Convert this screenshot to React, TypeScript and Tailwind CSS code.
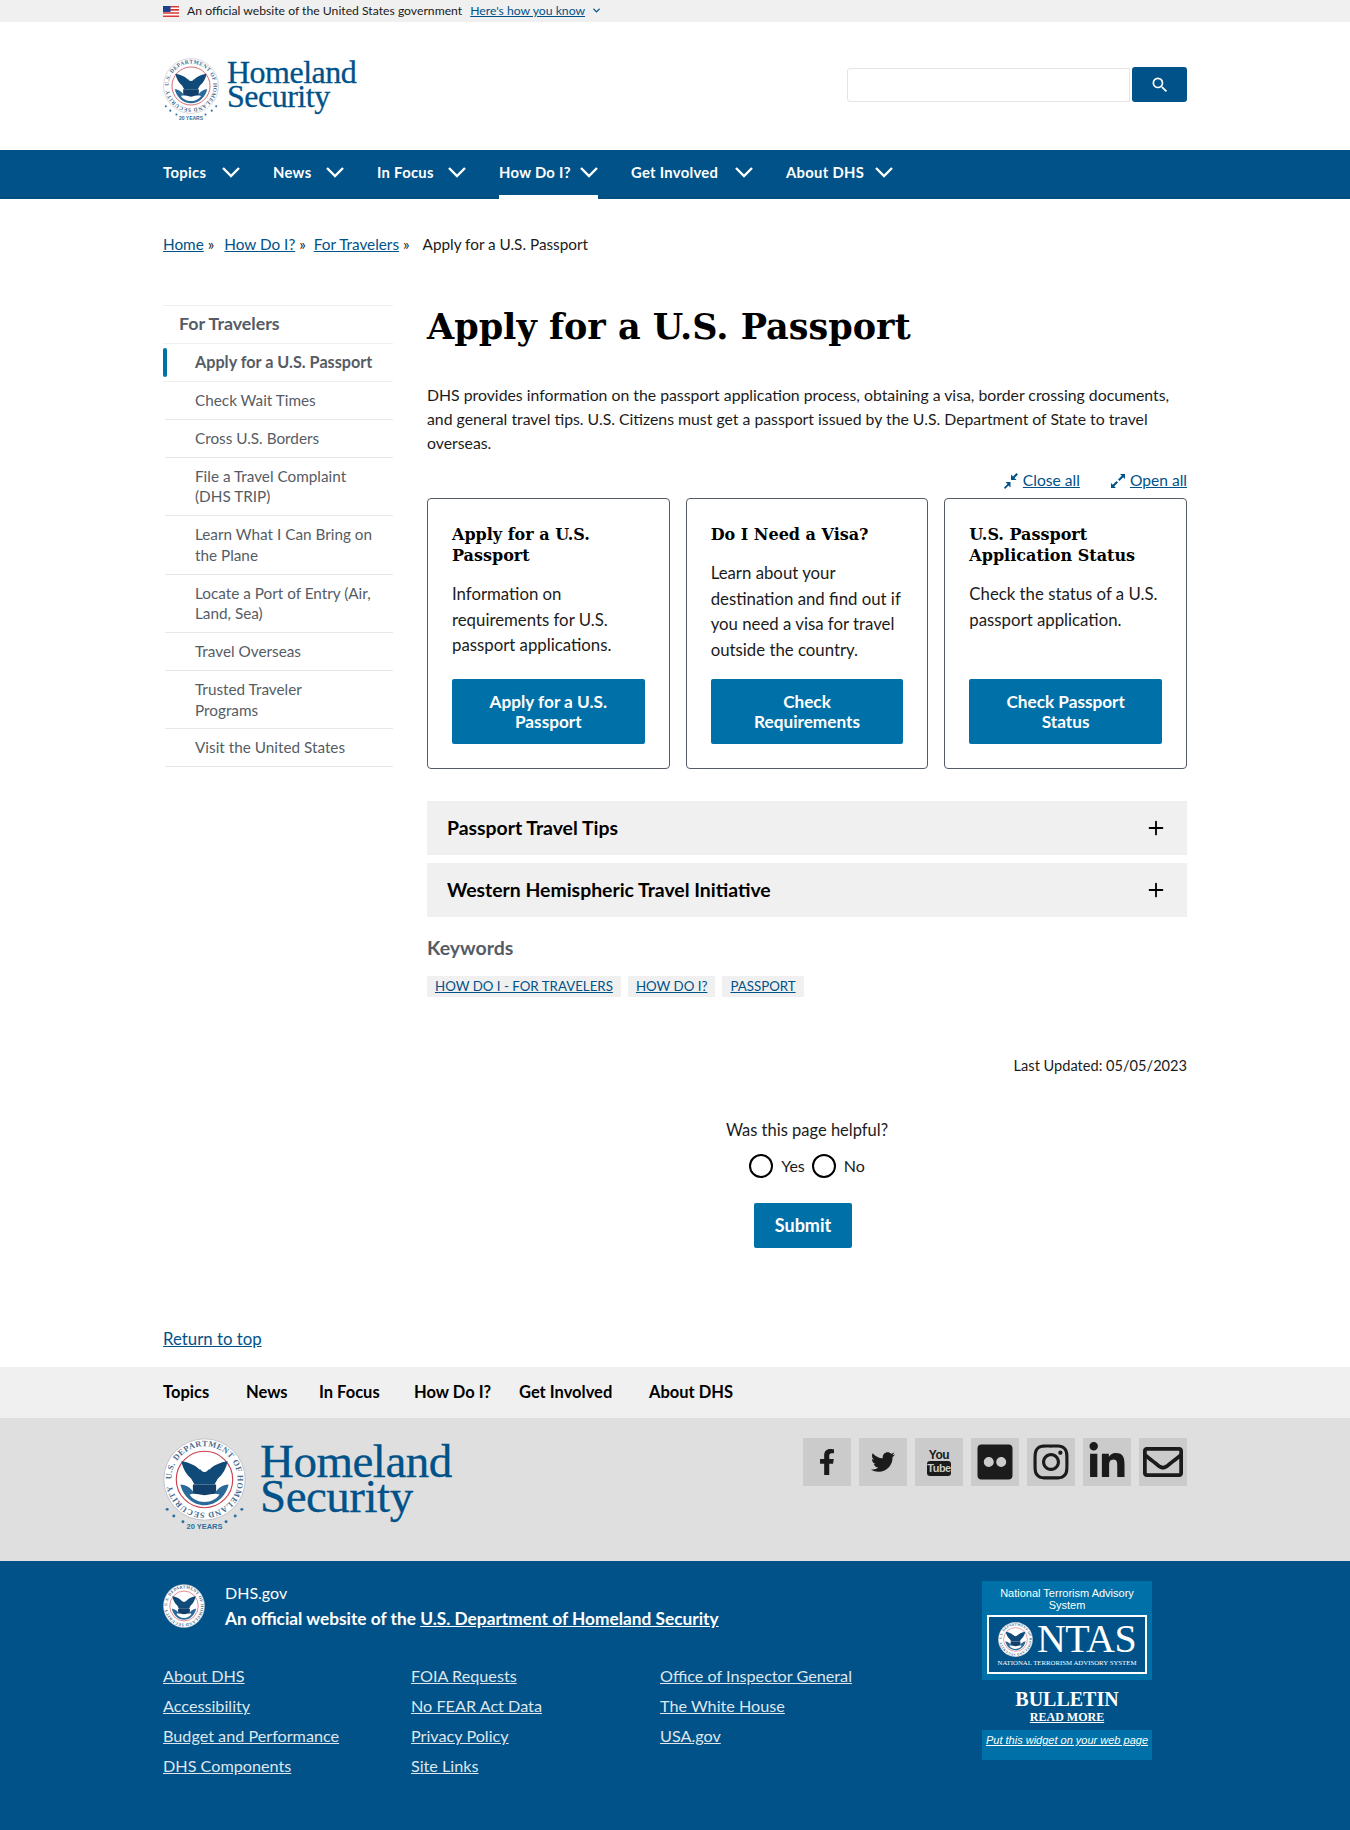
import { ChevronDown, Plus } from "lucide-react";
import { MdSearch } from "react-icons/md";
import { FaFacebookF, FaTwitter, FaFlickr, FaInstagram, FaLinkedinIn, FaRegEnvelope } from "react-icons/fa";

const navItems = [
  { label: "Topics", width: "w-[44px]" },
  { label: "News", width: "w-[38px]" },
  { label: "In Focus", width: "w-[56px]" },
  { label: "How Do I?", width: "w-[66px]" },
  { label: "Get Involved", width: "w-[89px]" },
  { label: "About DHS", width: "w-[74px]" },
];

const footerNav = [
  { label: "Topics", width: "w-[83px]" },
  { label: "News", width: "w-[73px]" },
  { label: "In Focus", width: "w-[95px]" },
  { label: "How Do I?", width: "w-[105px]" },
  { label: "Get Involved", width: "w-[130px]" },
  { label: "About DHS", width: "w-[90px]" },
];

const sideItems = [
  "Check Wait Times",
  "Cross U.S. Borders",
  "File a Travel Complaint (DHS TRIP)",
  "Learn What I Can Bring on the Plane",
  "Locate a Port of Entry (Air, Land, Sea)",
  "Travel Overseas",
  "Trusted Traveler\nPrograms",
  "Visit the United States",
];

const cards = [
  {
    title: "Apply for a U.S. Passport",
    text: "Information on requirements for U.S. passport applications.",
    button: "Apply for a U.S. Passport",
  },
  {
    title: "Do I Need a Visa?",
    text: "Learn about your destination and find out if you need a visa for travel outside the country.",
    button: "Check Requirements",
  },
  {
    title: "U.S. Passport Application Status",
    text: "Check the status of a U.S. passport application.",
    button: "Check Passport Status",
  },
];

const footerCols = [
  ["About DHS", "Accessibility", "Budget and Performance", "DHS Components"],
  ["FOIA Requests", "No FEAR Act Data", "Privacy Policy", "Site Links"],
  ["Office of Inspector General", "The White House", "USA.gov"],
];

function Seal({ size, width, years = true }: { size: number; width?: number; years?: boolean }) {
  const id = `seal-ring-${size}`;
  return (
    <svg
      width={width ?? size}
      height={years ? size * 1.15 : size}
      viewBox={years ? "0 0 100 115" : "0 0 100 100"}
      preserveAspectRatio={width ? "none" : "xMidYMid meet"}
      className="shrink-0"
    >
      <circle cx="50" cy="50" r="49" fill="#fff" stroke="#b9bcc4" strokeWidth="1" />
      <defs>
        <path id={id} d="M50 50m-40 0a40 40 0 1 1 80 0a40 40 0 1 1-80 0" />
      </defs>
      <text fontSize="10" fontWeight="700" fill="#4a6c8f" fontFamily="'Liberation Serif', serif" letterSpacing="0.6">
        <textPath href={`#${id}`}>U.S. DEPARTMENT OF HOMELAND SECURITY</textPath>
      </text>
      <circle cx="50" cy="50" r="34" fill="#fff" stroke="#c8434f" strokeWidth="1.4" />
      {/* eagle wings */}
      <path d="M22 28c9 1 17 5 22 10h12c5-5 13-9 22-10-2 9-6 16-12 21l-4 7H38l-4-7c-6-5-10-12-12-21z" fill="#0f4a78" />
      <circle cx="50" cy="36" r="5" fill="#fff" />
      {/* lower field with land and water */}
      <path d="M21 56c3 0 7 1 11 4l6 6h24l6-6c4-3 8-4 11-4-3 14-15 25-29 25S24 70 21 56z" fill="#2a6a9a" />
      <path d="M36 56h28v6c0 8-7 12-14 15-7-3-14-7-14-15z" fill="#123f6b" />
      <path d="M32 68c6-2 10 0 18 1 8-1 12-3 18-1-3 5-10 9-18 9s-15-4-18-9z" fill="#fff" />
      {years && (
        <g fill="#2d6f9e">
          <circle cx="5" cy="86" r="1.8" />
          <circle cx="13" cy="94" r="1.8" />
          <circle cx="24" cy="101" r="1.8" />
          <circle cx="76" cy="101" r="1.8" />
          <circle cx="87" cy="94" r="1.8" />
          <circle cx="95" cy="86" r="1.8" />
          <text x="50" y="110" textAnchor="middle" fontSize="9" fontWeight="700" fontFamily="'Liberation Sans', sans-serif">
            20 YEARS
          </text>
        </g>
      )}
    </svg>
  );
}

function Flag() {
  return (
    <svg width="16" height="11" viewBox="0 0 16 11" className="shrink-0">
      <rect width="16" height="11" fill="#fff" />
      <path d="M0 0h16v1.6H0zM0 3.1h16v1.6H0zM0 6.2h16v1.6H0zM0 9.4h16V11H0z" fill="#d83933" />
      <rect width="7.5" height="6" fill="#1f3f8f" />
    </svg>
  );
}

function ExpandIcon({ closing }: { closing?: boolean }) {
  return (
    <svg width="16" height="16" viewBox="0 0 16 16" fill="#005288">
      {closing ? (
        <path d="M15 1.5 11.5 5l2 2H8V1.5l2 2L13.5 0zM1 14.500 4.500 11l-2-2H7.500v5.500l-2-2L2 16z" />
      ) : (
        <path d="M10 1h5v5l-1.800-1.800L9.500 8 8 6.500l3.800-3.700zM6 15H1v-5l1.800 1.800L6.500 8 8 9.500l-3.800 3.700z" />
      )}
    </svg>
  );
}

function NavChevron() {
  return (
    <svg width="18" height="11" viewBox="0 0 18 11" fill="none" stroke="#fff" strokeWidth="2.400" className="mt-[5px] shrink-0">
      <path d="M1 1l8 8 8-8" />
    </svg>
  );
}

function YouTubeMark() {
  return (
    <div className="flex w-[24px] flex-col items-center font-['Liberation_Sans',sans-serif] font-bold text-[#1b1b1b]">
      <span className="text-[12px] leading-[12px] tracking-[-0.5px]">You</span>
      <span className="w-full rounded-[3px] bg-[#1b1b1b] text-center text-[11px] leading-[15px] tracking-[-0.5px] text-[#c9c9c9]">Tube</span>
    </div>
  );
}

export default function App() {
  const body = "font-['Lato','Noto_Sans',sans-serif]";
  const serif = "font-['DejaVu_Serif','Liberation_Serif',serif]";
  const logo = "font-['Liberation_Serif',serif] [-webkit-text-stroke:0.3px_#005288]";

  return (
    <div className={`${body} flex h-[1830px] flex-col overflow-hidden bg-white text-[15.800px] text-[#1b1b1b]`}>
      <div className="h-[22px] shrink-0 bg-[#f0f0f0]">
        <div className="mx-auto flex h-full w-[1024px] items-center gap-2 text-[12.200px]">
          <Flag />
          <span>An official website of the United States government</span>
          <a className="flex items-center gap-1 text-[#005288] underline">
            Here's how you know <ChevronDown size={11} strokeWidth={3} className="ml-0.5" />
          </a>
        </div>
      </div>

      <header className="mx-auto flex h-[128px] w-[1024px] shrink-0 items-start justify-between">
        <div className="flex items-start gap-2 pt-[36px]">
          <Seal size={56} />
          <div className={`${logo} mt-[2px] text-[32px] leading-[24px] tracking-[-0.5px] text-[#005288]`}>
            Homeland
            <br />
            Security
          </div>
        </div>
        <div className="flex gap-[2px] pt-[45px]">
          <input className="mt-[1px] h-[34px] w-[283px] rounded-l-[3px] border border-[#e4e4e4]" aria-label="Search" />
          <button className="flex h-[35px] w-[55px] items-center justify-center rounded-[3px] bg-[#005288] text-white">
            <MdSearch size={20} />
          </button>
        </div>
      </header>

      <nav className="h-[49px] shrink-0 border-b-[2px] border-[#004f7c] bg-[#005288]">
        <div className="mx-auto flex h-full w-[1024px] gap-[33px]">
          {navItems.map((item) => (
            <div
              key={item.label}
              className={`flex h-[49px] items-start gap-[15px] pt-[12px] text-[14.800px] font-bold leading-[20px] tracking-[0.3px] text-white ${
                item.label === "How Do I?" ? "border-b-4 border-white" : ""
              }`}
            >
              <span className={`${item.width} whitespace-nowrap`}>{item.label}</span>
              <NavChevron />
            </div>
          ))}
        </div>
      </nav>

      <div className="mx-auto w-[1024px]">
        <div className="flex h-[106px] items-start gap-1 pt-[34px] text-[15.300px] leading-[22px]">
          <a className="text-[#005288] underline">Home</a>
          <span className="mr-[6px]">»</span>
          <a className="text-[#005288] underline">How Do I?</a>
          <span className="mr-[4px]">»</span>
          <a className="text-[#005288] underline">For Travelers</a>
          <span className="mr-[9px]">»</span>
          <span>Apply for a U.S. Passport</span>
        </div>

        <div className="flex gap-[34px]">
          <aside className="w-[230px] shrink-0 text-[15.300px] text-[#565c65]">
            <div className="flex h-[38.500px] items-center border-y border-[#f0f0f0] pb-[2px] pl-4 text-[17.800px] font-bold">For Travelers</div>
            <div className="relative flex h-[38.500px] items-center border-b border-[#f0f0f0] pl-8 text-[16.200px] font-bold">
              <span className="absolute left-0 top-1 h-[29px] w-1 rounded-sm bg-[#0071a8]" />
              Apply for a U.S. Passport
            </div>
            {sideItems.map((item) => (
              <div key={item} className="ml-[2px] whitespace-pre-line border-b border-[#e8e8e8] py-[8px] pl-[30px] pr-2 leading-[20.750px]">
                {item}
              </div>
            ))}
          </aside>

          <main className="w-[760px]">
            <h1 className={`${serif} -mt-[3px] text-[35px] font-bold leading-[50px] text-black`}>Apply for a U.S. Passport</h1>
            <p className="mt-[31px] leading-[24px]">
              DHS provides information on the passport application process, obtaining a visa, border crossing documents, and general travel tips. U.S. Citizens must get a passport issued by the U.S. Department of State to travel overseas.
            </p>
            <div className="mt-[14px] flex h-[24px] justify-end gap-[30px] text-[15.600px] text-[#005288]">
              <a className="flex items-center gap-1 underline">
                <ExpandIcon closing />
                Close all
              </a>
              <a className="flex items-center gap-1 underline">
                <ExpandIcon />
                Open all
              </a>
            </div>

            <div className="mt-[5px] grid grid-cols-3 gap-4">
              {cards.map((card) => (
                <div key={card.title} className="flex h-[271px] flex-col rounded-[4px] border border-[#565c65] p-6">
                  <h3 className={`${serif} mt-[1px] text-[16px] font-bold leading-[21px] text-black`}>{card.title}</h3>
                  <p className="mt-[15px] flex-1 text-[16.800px] leading-[25.700px]">{card.text}</p>
                  <button className="flex h-[65px] items-center justify-center rounded-[2px] bg-[#0071a8] px-5 text-[17.200px] font-bold leading-[20px] text-white">
                    {card.button}
                  </button>
                </div>
              ))}
            </div>

            <div className="mt-[32px] flex flex-col gap-2">
              {["Passport Travel Tips", "Western Hemispheric Travel Initiative"].map((title) => (
                <div key={title} className="flex h-[54px] items-center justify-between bg-[#f0f0f0] pl-5 pr-[20px] text-[19.400px] font-bold text-black">
                  {title}
                  <Plus size={22} strokeWidth={2} />
                </div>
              ))}
            </div>

            <h2 className="mt-[19px] text-[19.500px] font-bold leading-[24px] text-[#565c65]">Keywords</h2>
            <div className="mt-[16px] flex gap-[7px]">
              {["HOW DO I - FOR TRAVELERS", "HOW DO I?", "PASSPORT"].map((tag) => (
                <a key={tag} className="bg-[#f0f0f0] px-2 text-[13.300px] leading-[21px] text-[#005288] underline">
                  {tag}
                </a>
              ))}
            </div>

            <p className="mt-[58px] text-right text-[14.600px] leading-[22px]">Last Updated: 05/05/2023</p>

            <div className="mt-[41px] flex flex-col items-center">
              <p className="text-[16.500px] leading-[24px]">Was this page helpful?</p>
              <div className="mt-[11px] flex h-[26px] items-center text-[16px]">
                <span className="h-[24px] w-[24px] rounded-full border-2 border-black" />
                <span className="ml-[8px] mr-[7px]">Yes</span>
                <span className="h-[24px] w-[24px] rounded-full border-2 border-black" />
                <span className="ml-[8px]">No</span>
              </div>
              <button className="-ml-[8px] mt-[24px] h-[45px] w-[98px] rounded-[2px] bg-[#0071a8] text-[18px] font-bold text-white">Submit</button>
            </div>
          </main>
        </div>

        <div className="mt-[80px] h-[39px] text-[16.800px] leading-[22px]">
          <a className="text-[#005288] underline">Return to top</a>
        </div>
      </div>

      <div className="h-[51px] shrink-0 bg-[#f0f0f0]">
        <div className="mx-auto flex h-full w-[1024px] items-center text-[16.500px] font-bold text-black">
          {footerNav.map((item) => (
            <span key={item.label} className={item.width}>
              {item.label}
            </span>
          ))}
        </div>
      </div>

      <div className="h-[143px] shrink-0 bg-[#dfdfdf]">
        <div className="mx-auto flex w-[1024px] items-start justify-between pt-5">
          <div className="flex items-start gap-[14px]">
            <Seal size={83} />
            <div className={`${logo} mt-[6px] text-[47px] leading-[35px] tracking-[-0.5px] text-[#005288]`}>
              Homeland
              <br />
              Security
            </div>
          </div>
          <div className="flex gap-2">
            <div className="flex h-[48px] w-[48px] items-center justify-center bg-[#cbcbcb] text-[#1b1b1b]">
              <FaFacebookF size={26} />
            </div>
            <div className="flex h-[48px] w-[48px] items-center justify-center bg-[#cbcbcb] text-[#1b1b1b]">
              <FaTwitter size={24} />
            </div>
            <div className="flex h-[48px] w-[48px] items-center justify-center bg-[#cbcbcb]">
              <YouTubeMark />
            </div>
            {[FaFlickr, FaInstagram, FaLinkedinIn, FaRegEnvelope].map((Icon, i) => (
              <div key={i} className="flex h-[48px] w-[48px] items-center justify-center bg-[#cbcbcb] text-[#1b1b1b]">
                <Icon size={40} />
              </div>
            ))}
          </div>
        </div>
      </div>

      <footer className="flex-1 bg-[#005288] text-white">
        <div className="mx-auto flex w-[1024px] justify-between">
          <div className="w-[780px]">
            <div className="flex items-center gap-[20px] pt-[19px]">
              <Seal size={44} width={42} years={false} />
              <div className="leading-[26px]">
                <div className="text-[16px]">DHS.gov</div>
                <div className="text-[17.300px] font-bold">
                  An official website of the <a className="underline">U.S. Department of Homeland Security</a>
                </div>
              </div>
            </div>
            <div className="mt-[29px] grid grid-cols-[248px_249px_1fr] text-[16.200px] leading-[30px] text-[#dfe6ee]">
              {footerCols.map((col, i) => (
                <div key={i} className="flex flex-col">
                  {col.map((link) => (
                    <a key={link} className="underline">
                      {link}
                    </a>
                  ))}
                </div>
              ))}
            </div>
          </div>
          <div className="mr-[35px] mt-[20px] w-[170px] font-['Liberation_Sans',sans-serif]">
            <div className="h-[99px] bg-[#0071a8] px-[5px] pt-[6px] text-center text-[11px] leading-[12px]">
              National Terrorism Advisory System
              <div className="mt-[4px] flex h-[59px] flex-col items-center justify-center border-[2px] border-white bg-[#005288]">
                <div className="flex items-center gap-1">
                  <Seal size={35} years={false} />
                  <span className="font-['Liberation_Serif',serif] text-[40px] leading-[36px] tracking-[-0.5px]">NTAS</span>
                </div>
                <span className="font-['Liberation_Serif',serif] text-[6.800px] leading-[11px]">NATIONAL TERRORISM ADVISORY SYSTEM</span>
              </div>
            </div>
            <div className="mt-[9px] text-center font-['Liberation_Serif',serif] font-bold">
              <div className="text-[20px] leading-[20px]">BULLETIN</div>
              <div className="text-[12px] leading-[16px] underline">READ MORE</div>
            </div>
            <div className="mt-[5px] h-[30px] bg-[#0071a8] pt-[2px] text-center text-[11px] italic underline">Put this widget on your web page</div>
          </div>
        </div>
      </footer>
    </div>
  );
}
